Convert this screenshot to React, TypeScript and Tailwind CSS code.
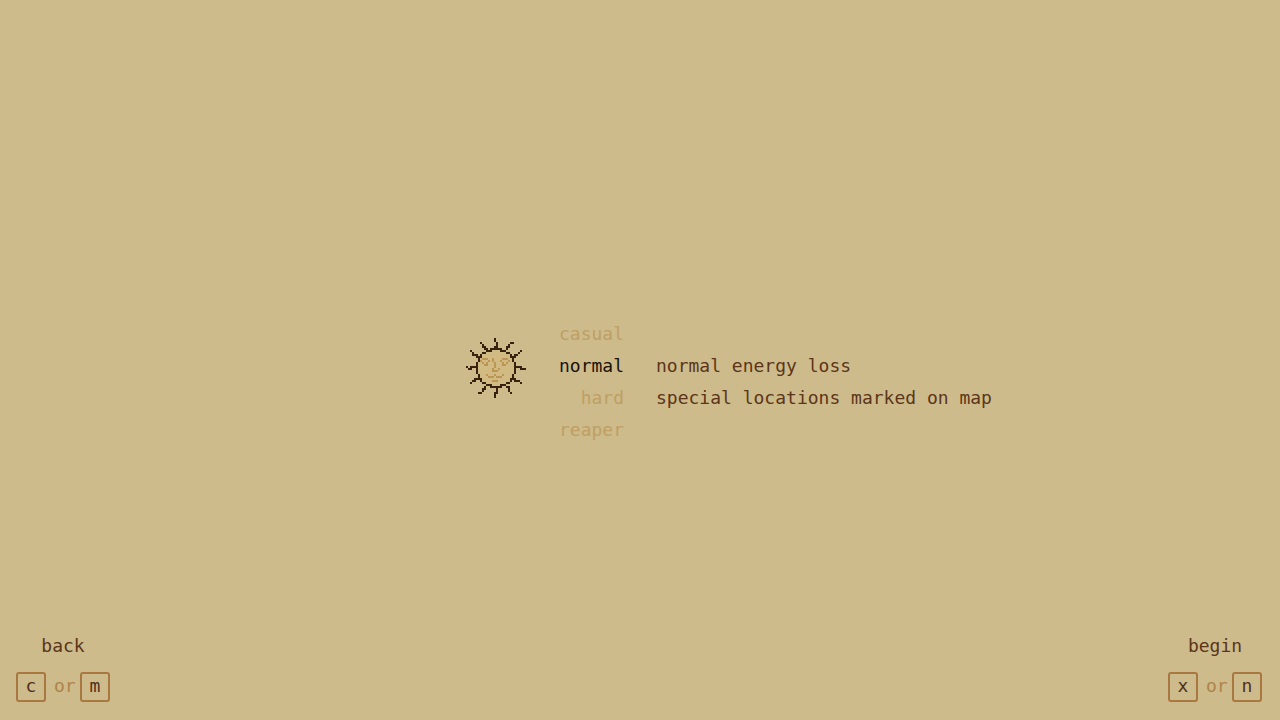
import { useState } from "react";

type Run = [x: number, y: number, w: number, h: number];

// Sprite runs on a 30 x 30 grid: column, row, width, height.
const DISC: Run[] = [
  [12, 5, 6, 1], [10, 6, 3, 1], [17, 6, 3, 1], [8, 7, 2, 1], [20, 7, 2, 1],
  [7, 8, 1, 2], [22, 8, 1, 2], [6, 10, 1, 2], [23, 10, 1, 2], [5, 12, 1, 6],
  [24, 12, 1, 6], [6, 18, 1, 2], [23, 18, 1, 2], [7, 20, 1, 2], [22, 20, 1, 2],
  [8, 22, 2, 1], [20, 22, 2, 1], [10, 23, 3, 1], [17, 23, 3, 1], [12, 24, 6, 1],
];

const RAYS: Run[] = [
  [14, 0, 1, 2], [15, 2, 1, 3], [14, 4, 1, 1],
  [7, 2, 1, 1], [8, 3, 1, 2], [9, 4, 1, 2], [10, 5, 1, 1],
  [2, 6, 1, 1], [3, 7, 1, 2], [4, 8, 2, 1], [5, 9, 2, 1],
  [22, 2, 2, 1], [21, 3, 1, 2], [20, 4, 1, 2],
  [27, 6, 1, 1], [26, 7, 1, 1], [24, 8, 2, 1], [23, 9, 2, 1],
  [0, 14, 1, 1], [1, 15, 2, 1], [2, 14, 3, 1],
  [25, 14, 3, 1], [27, 15, 2, 1], [29, 15, 1, 1],
  [2, 22, 1, 1], [3, 21, 2, 1], [4, 20, 1, 1], [5, 20, 2, 1],
  [6, 27, 2, 1], [8, 25, 1, 2], [9, 24, 1, 2],
  [23, 20, 2, 1], [24, 21, 3, 1], [27, 22, 1, 1],
  [20, 24, 1, 1], [21, 24, 1, 3], [22, 27, 1, 1],
  [15, 25, 1, 3], [14, 27, 1, 3],
];

const FACE: Run[] = [
  [8, 10, 3, 1], [7, 11, 1, 1], [11, 11, 1, 1], [8, 12, 1, 1], [10, 12, 1, 1], [9, 13, 2, 1],
  [17, 11, 1, 1], [18, 10, 3, 1], [21, 11, 1, 1], [18, 12, 1, 1], [20, 12, 1, 1], [18, 13, 2, 1],
  [13, 10, 1, 2], [14, 12, 1, 3], [13, 15, 1, 2], [14, 16, 2, 1], [16, 15, 1, 1],
  [10, 18, 1, 1], [11, 19, 3, 1], [14, 18, 1, 1], [15, 19, 3, 1], [18, 18, 1, 1], [13, 21, 3, 1],
];

function Pixels({ runs, className }: { runs: Run[]; className: string }) {
  return (
    <g className={className}>
      {runs.map(([x, y, w, h], i) => (
        <rect key={i} x={x} y={y} width={w} height={h} />
      ))}
    </g>
  );
}

function Sun() {
  return (
    <svg viewBox="0 0 30 30" shapeRendering="crispEdges" aria-hidden="true" className="h-15 w-15">
      <circle cx="15" cy="15" r="9" className="fill-[#d2bb82]" />
      <Pixels runs={FACE} className="fill-[#bc9454]" />
      <Pixels runs={DISC} className="fill-[#37220f]" />
      <Pixels runs={RAYS} className="fill-[#37220f]" />
    </svg>
  );
}

function Key({ name }: { name: string }) {
  return (
    <kbd className="flex h-[30px] w-[30px] items-center justify-center rounded-[3px] border-2 border-[#a87840] pb-0.5 font-[inherit] text-[#50301a]">
      {name}
    </kbd>
  );
}

function KeyHint({ label, keys }: { label: string; keys: [string, string] }) {
  return (
    <button type="button" className="flex flex-col items-center gap-2.5 text-[#5c3519]">
      <span className="leading-8">{label}</span>
      <span className="flex items-center">
        <Key name={keys[0]} />
        <span className="w-[34px] pb-0.5 pl-2 text-left text-[#b08348]">or</span>
        <Key name={keys[1]} />
      </span>
    </button>
  );
}

const LEVELS = ["casual", "normal", "hard", "reaper"];

export default function App() {
  const [level, setLevel] = useState("normal");
  return (
    <div className="flex min-h-screen flex-col bg-[#cdbb8b] font-['DejaVu_Sans_Mono',monospace] text-[18px] leading-6">
      <main className="grid flex-1 grid-cols-2 items-start gap-x-8 pt-[318px]">
        <div className="flex items-start justify-end gap-7">
          <div className="pt-5">
            <Sun />
          </div>
          <div className="flex w-[70px] flex-col items-end">
            {LEVELS.map((name) => (
              <button
                key={name}
                type="button"
                aria-pressed={level === name}
                onClick={() => setLevel(name)}
                className={name === level ? "leading-8 text-[#1c1209]" : "leading-8 text-[#bf9f63]"}
              >
                {name}
              </button>
            ))}
          </div>
        </div>
        <div className="pt-8 leading-8 text-[#5c3519]">
          <p>normal energy loss</p>
          <p>special locations marked on map</p>
        </div>
      </main>
      <footer className="flex items-end justify-between pr-[18px] pb-[18px] pl-4">
        <KeyHint label="back" keys={["c", "m"]} />
        <KeyHint label="begin" keys={["x", "n"]} />
      </footer>
    </div>
  );
}
